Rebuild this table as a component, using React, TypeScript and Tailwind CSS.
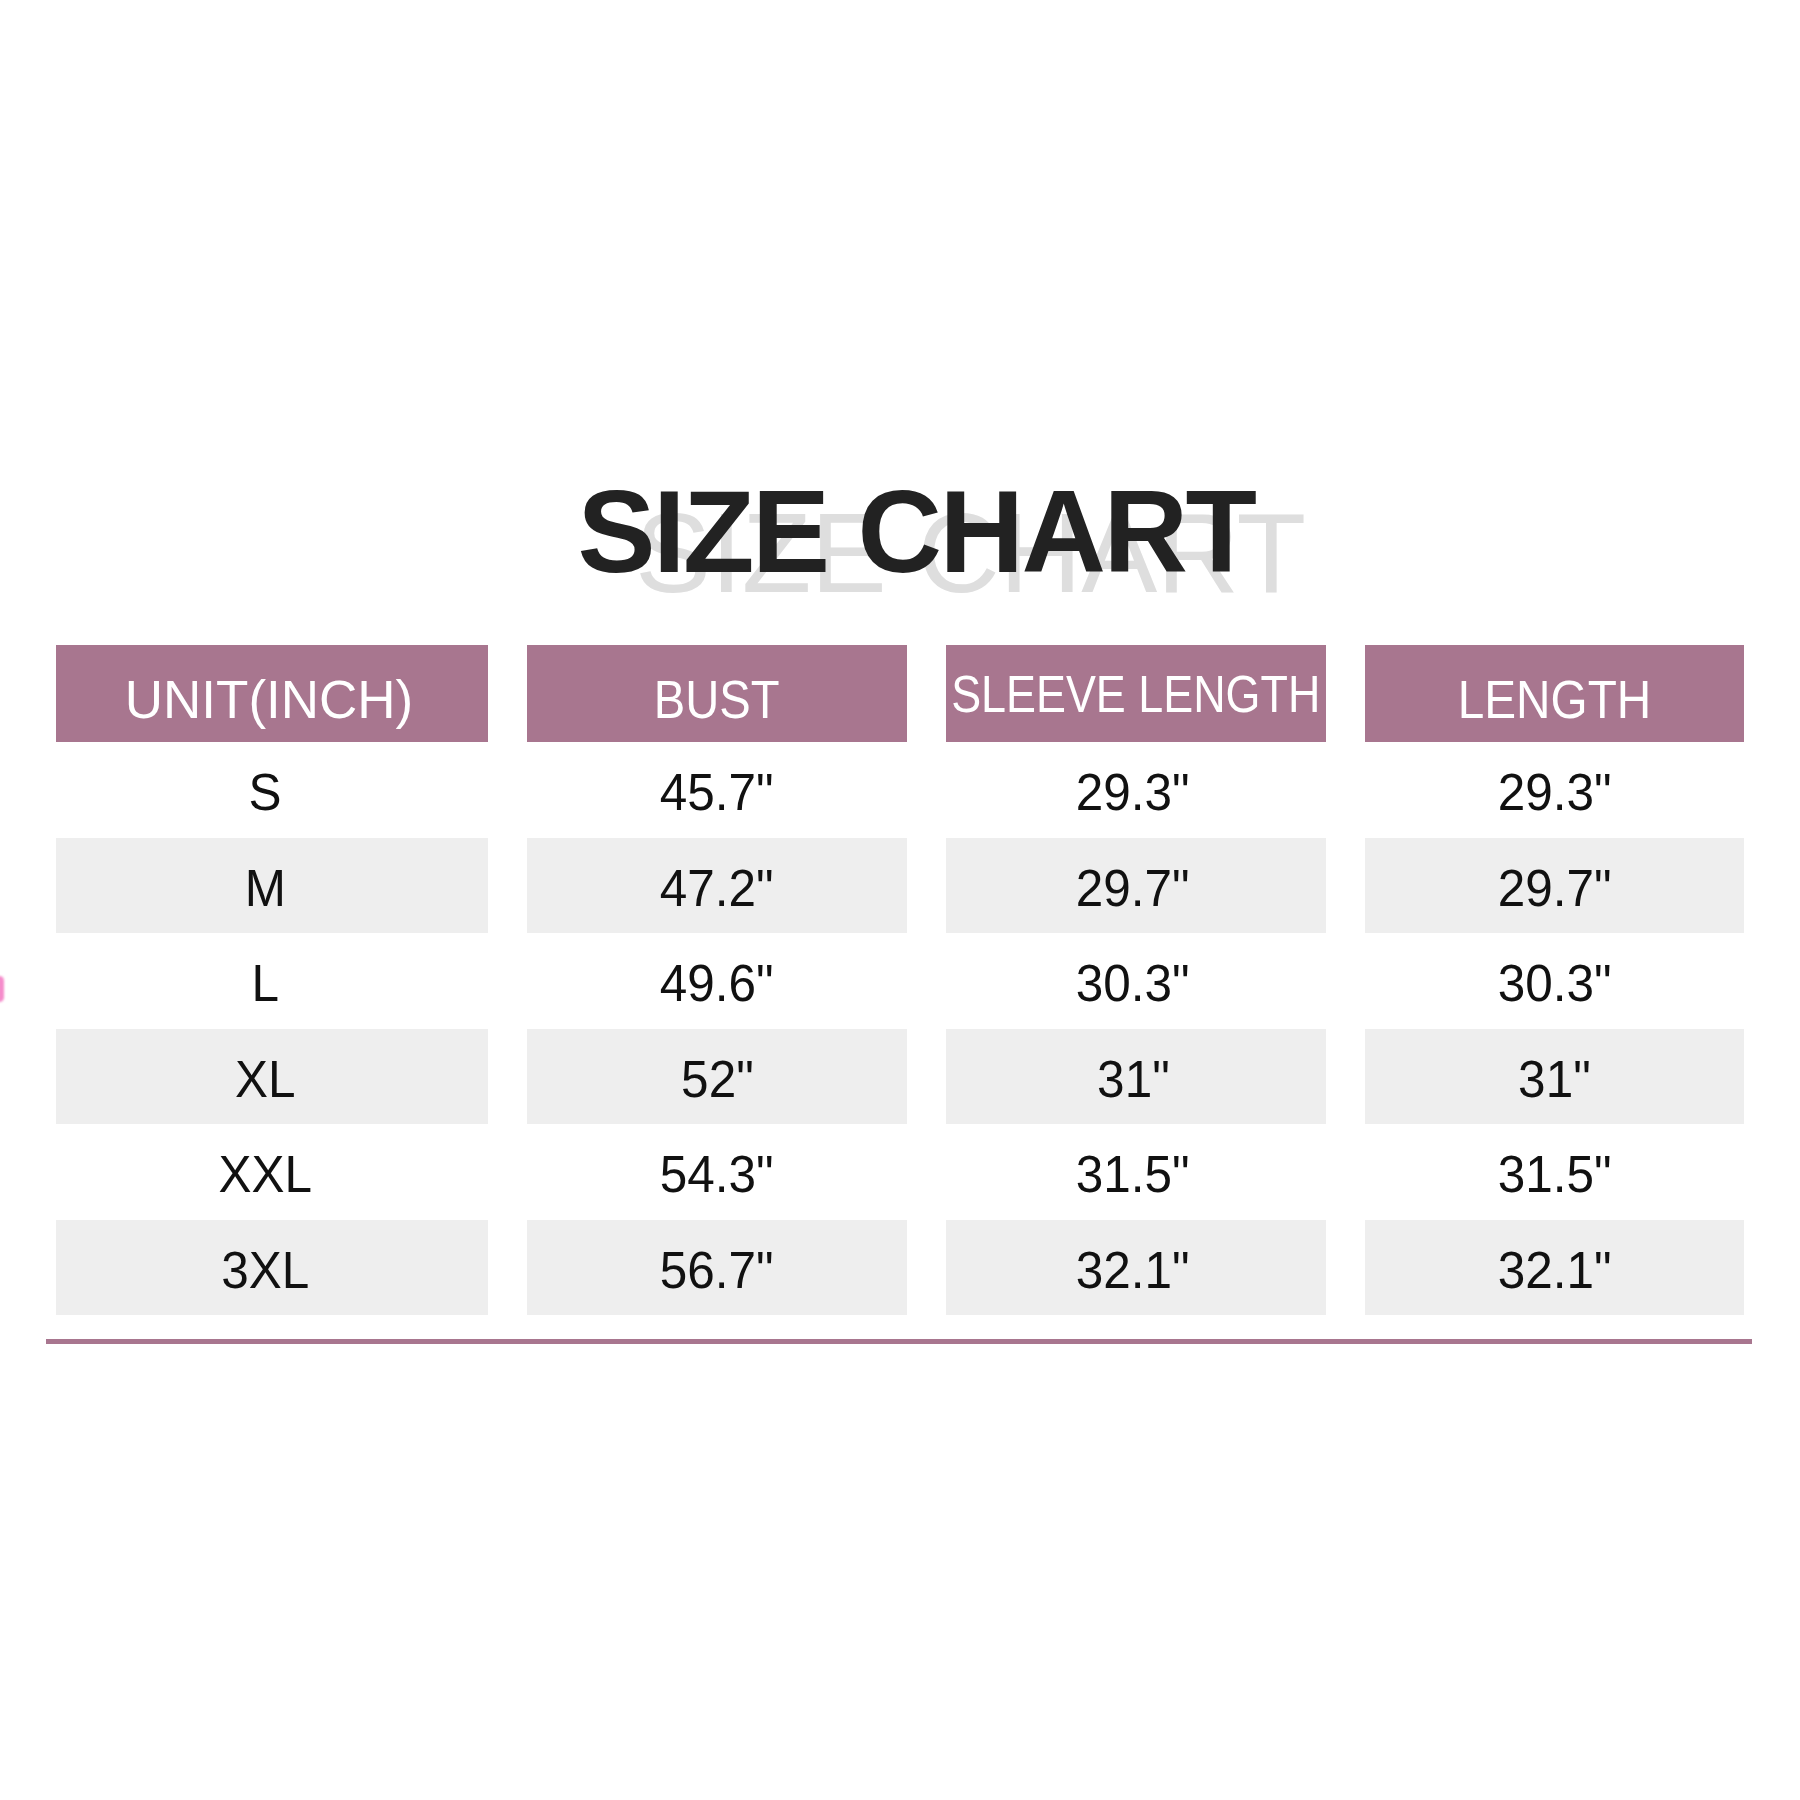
import React from "react";

const rows = [
  ["S", '45.7"', '29.3"', '29.3"'],
  ["M", '47.2"', '29.7"', '29.7"'],
  ["L", '49.6"', '30.3"', '30.3"'],
  ["XL", '52"', '31"', '31"'],
  ["XXL", '54.3"', '31.5"', '31.5"'],
  ["3XL", '56.7"', '32.1"', '32.1"'],
];

const font = { fontFamily: '"Liberation Sans", Arial, sans-serif' };

const colPad = ["pr-[14px]", "pr-0", "pr-[6px]", "pr-0"];

export default function App() {
  return (
    <div
      className="relative w-[1800px] h-[1800px] bg-white overflow-hidden"
      style={font}
    >
      <div className="absolute left-[-5px] top-[976px] w-[9px] h-[26px] rounded-full bg-[#f58ccb] blur-[1px]" />

      <div className="flex flex-col pt-[473px]">
        {/* Title */}
        <div className="relative h-[117px] flex justify-center">
          <div className="absolute left-[635px] top-[23px] text-[114px] leading-none font-normal text-[#dedede] tracking-[-0.5px] whitespace-nowrap">
            SIZE CHART
          </div>
          <div className="relative ml-[32px] text-[117px] leading-none font-bold text-[#222222] tracking-[-2.5px] whitespace-nowrap">
            SIZE CHART
          </div>
        </div>

        {/* Table */}
        <div className="mt-[55px] ml-[56px] grid grid-cols-[432px_380px_380px_379px] gap-x-[39px]">
          <div className="h-[97px] bg-[#a8768f] text-white flex items-center justify-center pt-[12px] pr-[6px]">
            <span className="text-[53px] leading-none scale-x-[1.0] whitespace-nowrap">UNIT(INCH)</span>
          </div>
          <div className="h-[97px] bg-[#a8768f] text-white flex items-center justify-center pt-[12px]">
            <span className="text-[53px] leading-none scale-x-[0.89] whitespace-nowrap">BUST</span>
          </div>
          <div className="h-[97px] bg-[#a8768f] text-white flex items-center justify-center pt-[2px]">
            <span className="text-[51px] leading-none scale-x-[0.88] whitespace-nowrap">SLEEVE LENGTH</span>
          </div>
          <div className="h-[97px] bg-[#a8768f] text-white flex items-center justify-center pt-[12px]">
            <span className="text-[53px] leading-none scale-x-[0.9] whitespace-nowrap">LENGTH</span>
          </div>

          {rows.map((r, i) =>
            r.map((c, j) => (
              <div
                key={`${i}-${j}`}
                className={`h-[95.5px] flex items-center justify-center pt-[6px] text-[#111111] ${colPad[j]} ${
                  i % 2 === 1 ? "bg-[#eeeeee]" : "bg-white"
                }`}
              >
                <span className="text-[51px] leading-none scale-x-[0.97] whitespace-nowrap">{c}</span>
              </div>
            ))
          )}
        </div>

        {/* Bottom rule */}
        <div className="mt-[24px] ml-[46px] w-[1706px] h-[5px] bg-[#a8768f]" />
      </div>
    </div>
  );
}
